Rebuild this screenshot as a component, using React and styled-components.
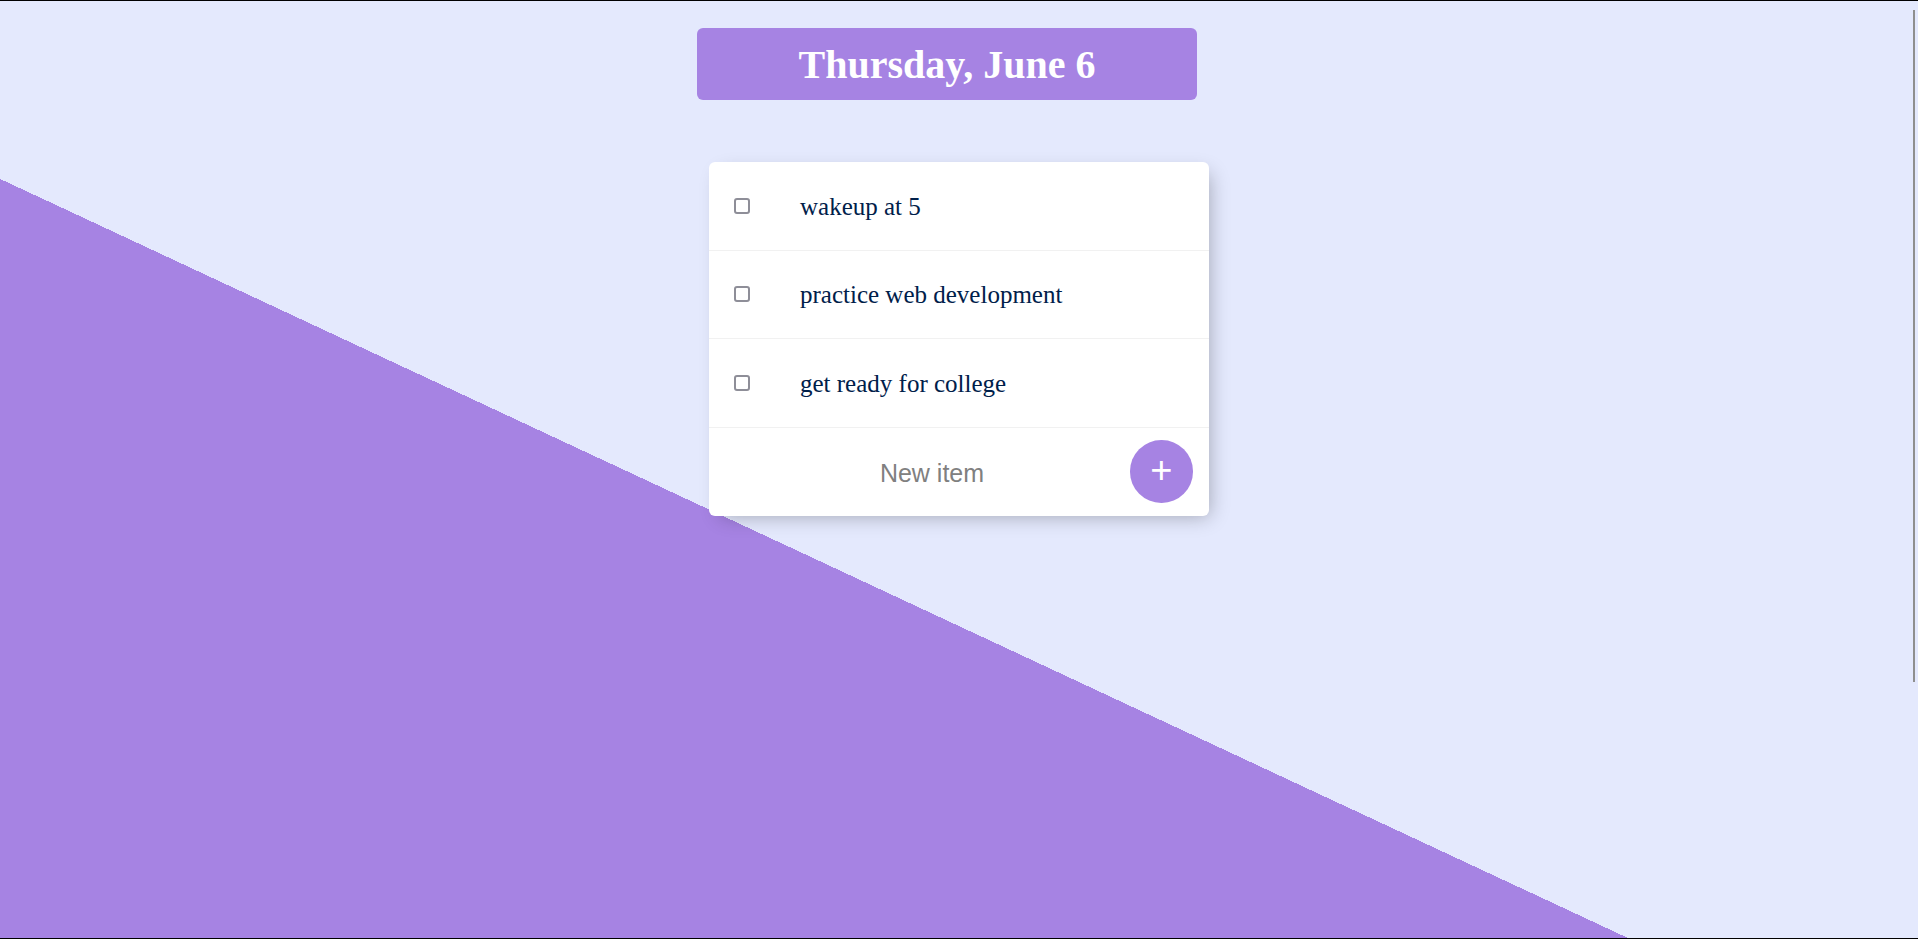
import React from 'react'
import styled, { createGlobalStyle } from 'styled-components'

const GlobalStyle = createGlobalStyle`
  html, body {
    margin: 0;
    padding: 0;
    height: 100%;
    overflow: hidden;
  }
  #root {
    height: 100%;
  }
`;

const items = ['wakeup at 5', 'practice web development', 'get ready for college'];

const App = () => {
  return (
    <Page>
      <GlobalStyle />
      <Heading>
        <Title>Thursday, June 6</Title>
      </Heading>

      <Card>
        {items.map((text) => (
          <Item key={text}>
            <Check type="checkbox" />
            <ItemText>{text}</ItemText>
          </Item>
        ))}
        <AddForm onSubmit={(e) => e.preventDefault()}>
          <NewItem type="text" placeholder="New item" autoComplete="off" />
          <AddButton type="submit">+</AddButton>
        </AddForm>
      </Card>

      <ScrollThumb />
    </Page>
  )
};

const Page = styled.div`
  position: relative;
  box-sizing: border-box;
  height: 100%;
  display: flex;
  flex-direction: column;
  align-items: center;
  border-top: 1px solid #000;
  border-bottom: 1px solid #000;
  background-color: #E4E9FD;
  background-image: linear-gradient(25deg, #A683E3 41.46%, #E4E9FD 41.46%);
  background-origin: border-box;
`;

const Heading = styled.div`
  width: 500px;
  margin: 27px 24px 0 0;
  background-color: #A683E3;
  border-radius: 6px;
  text-align: center;
`;

const Title = styled.h1`
  margin: 0;
  padding: 12.5px;
  font-family: "Liberation Serif", "Times New Roman", serif;
  font-size: 40px;
  line-height: 47px;
  font-weight: 700;
  color: #fff;
`;

const Card = styled.div`
  width: 500px;
  margin-top: 62px;
  background: #fff;
  border-radius: 6px;
  box-shadow: 6px 6px 19px -6px rgba(0, 0, 0, 0.3);
`;

const Item = styled.div`
  min-height: 87.5px;
  display: flex;
  align-items: center;
  border-bottom: 1px solid #F1F1F1;
`;

const Check = styled.input`
  appearance: none;
  box-sizing: border-box;
  width: 16px;
  height: 16px;
  margin: 0 0 0 25px;
  border: 2px solid #8e8e98;
  border-radius: 3px;
  background: #fff;
  flex-shrink: 0;

  &:checked {
    background: #A683E3;
    border-color: #A683E3;
  }
`;

const ItemText = styled.p`
  margin: 0 0 0 25px;
  padding: 26px 25px 24px;
  font-family: "Liberation Serif", "Times New Roman", serif;
  font-size: 25px;
  font-weight: 200;
  color: #00204a;
`;

const AddForm = styled.form`
  min-height: 88px;
  display: flex;
  align-items: center;
  padding-left: 25px;
`;

const NewItem = styled.input`
  box-sizing: border-box;
  width: 396px;
  height: 75px;
  padding: 4px 2.5px 0;
  border: none;
  text-align: center;
  font-family: "Liberation Sans", Arial, sans-serif;
  font-size: 25px;
  font-weight: 200;
  color: #00204a;
  background: transparent;

  &::placeholder {
    color: grey;
    opacity: 1;
  }

  &:focus {
    outline: none;
    box-shadow: inset 0 -3px 0 0 #A683E3;
  }
`;

const AddButton = styled.button`
  width: 62.5px;
  height: 62.5px;
  flex-shrink: 0;
  padding: 0 0 3px;
  border: 0;
  border-radius: 50%;
  background-color: #A683E3;
  color: #fff;
  font-family: "Liberation Sans", Arial, sans-serif;
  font-size: 38px;
  line-height: 1;
  cursor: pointer;
`;

const ScrollThumb = styled.div`
  position: absolute;
  top: 9px;
  right: 3px;
  width: 2px;
  height: 672px;
  background: #8f8f8f;
`;

export default App;
